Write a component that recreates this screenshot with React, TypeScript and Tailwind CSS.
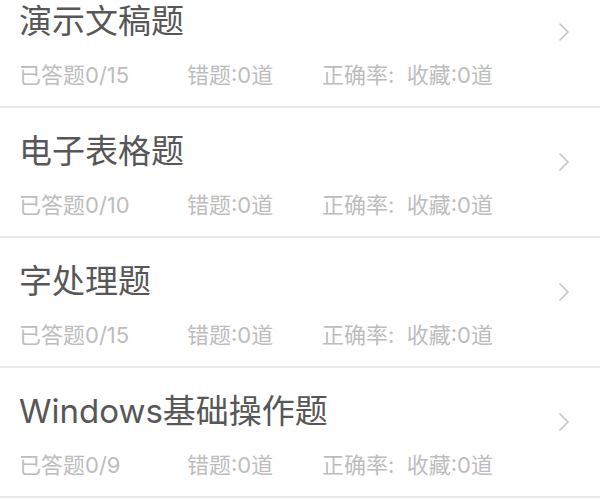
const rows = [
  { title: '演示文稿题', done: '0/15' },
  { title: '电子表格题', done: '0/10' },
  { title: '字处理题', done: '0/15' },
  { title: 'Windows基础操作题', done: '0/9' },
];

function Chevron() {
  return (
    <svg width="12" height="20" viewBox="0 0 12 20" fill="none">
      <path d="M2 2 L10 10 L2 18" stroke="#c4c4c4" strokeWidth="1.6" strokeLinecap="round" strokeLinejoin="round" />
    </svg>
  );
}

export default function App() {
  return (
    <div
      className="w-[600px] h-[500px] overflow-hidden bg-white"
      style={{ fontFamily: 'Inter, "Noto Sans CJK SC", sans-serif' }}
    >
      <div className="-mt-[22px]">
        {rows.map((row) => (
          <div key={row.title} className="flex h-[130px] border-b-2 border-[#e9e9e9]">
            <div className="flex-1 pl-[19px]">
              <div className="mt-[23px] h-[40px] leading-[40px] text-[33px] text-[#575757]">{row.title}</div>
              <div className="mt-[19px] flex h-[30px] leading-[30px] text-[22px] text-[#bdbdbd]">
                <span className="w-[168px]">已答题{row.done}</span>
                <span className="w-[135px]">错题:0道</span>
                <span>正确率:&nbsp; 收藏:0道</span>
              </div>
            </div>
            <div className="pt-[44px] pr-[30px]">
              <Chevron />
            </div>
          </div>
        ))}
      </div>
    </div>
  );
}
